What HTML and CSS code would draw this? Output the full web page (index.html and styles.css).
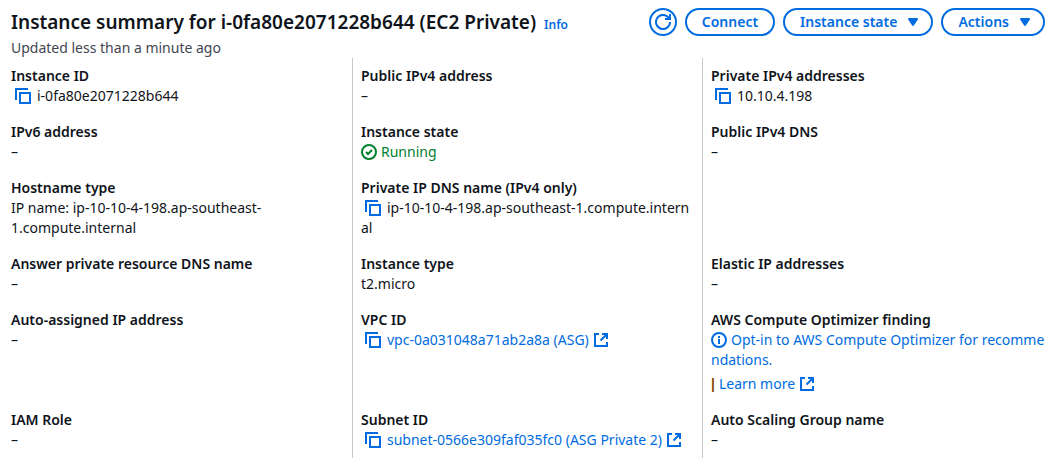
FILE: index.html
```html
<!DOCTYPE html>
<html lang="en">
<head>
<meta charset="utf-8">
<meta name="viewport" content="width=device-width, initial-scale=1">
<title>Instance summary</title>
<link rel="stylesheet" href="styles.css">
</head>
<body>
<svg class="sprite" aria-hidden="true">
  <symbol id="copy" viewBox="0 0 16 16"><path d="M1 12V1h12M5 5h10v10H5z" fill="none" stroke="currentColor" stroke-width="2"/></symbol>
  <symbol id="external" viewBox="0 0 16 16"><path d="M6 2H2v12h12v-4M9 2h5v5M13.5 2.5L7.5 8.5" fill="none" stroke="currentColor" stroke-width="2"/></symbol>
  <symbol id="check" viewBox="0 0 16 16"><circle cx="8" cy="8" r="7" fill="none" stroke="currentColor" stroke-width="2"/><path d="M5 8l2 2 4-4" fill="none" stroke="currentColor" stroke-width="2"/></symbol>
  <symbol id="info" viewBox="0 0 16 16"><circle cx="8" cy="8" r="7" fill="none" stroke="currentColor" stroke-width="2"/><path d="M8 4v2M8 7v5" fill="none" stroke="currentColor" stroke-width="2"/></symbol>
  <symbol id="refresh" viewBox="0 0 16 16"><path d="M15 8a7 7 0 1 1-1.7-4.6L15 5M10 5h5V0" fill="none" stroke="currentColor" stroke-width="2"/></symbol>
  <symbol id="caret" viewBox="0 0 16 16"><path d="M4 5h8l-4 6z" fill="currentColor" stroke="currentColor" stroke-width="2" stroke-linejoin="round"/></symbol>
</svg>
<main class="panel">
  <header class="header">
    <div class="heading">
      <div class="title-row">
        <h1 class="title">Instance summary for i-0fa80e2071228b644 (EC2 Private)</h1>
        <a class="info-link" href="#info">Info</a>
      </div>
      <p class="updated">Updated less than a minute ago</p>
    </div>
    <div class="actions">
      <button class="button button-icon" type="button" aria-label="Refresh"><svg class="icon"><use href="#refresh"/></svg></button>
      <button class="button" type="button">Connect</button>
      <button class="button" type="button">Instance state <svg class="icon caret"><use href="#caret"/></svg></button>
      <button class="button" type="button">Actions <svg class="icon caret"><use href="#caret"/></svg></button>
    </div>
  </header>
  <dl class="details">
    <div class="cell"><dt>Instance ID</dt><dd><button class="copy" type="button" aria-label="Copy instance ID"><svg class="icon"><use href="#copy"/></svg></button>i-0fa80e2071228b644</dd></div>
    <div class="cell"><dt>Public IPv4 address</dt><dd>–</dd></div>
    <div class="cell"><dt>Private IPv4 addresses</dt><dd><button class="copy" type="button" aria-label="Copy private IPv4 address"><svg class="icon"><use href="#copy"/></svg></button>10.10.4.198</dd></div>

    <div class="cell"><dt>IPv6 address</dt><dd>–</dd></div>
    <div class="cell"><dt>Instance state</dt><dd class="success"><svg class="icon status"><use href="#check"/></svg>Running</dd></div>
    <div class="cell"><dt>Public IPv4 DNS</dt><dd>–</dd></div>

    <div class="cell"><dt>Hostname type</dt><dd>IP name: ip-10-10-4-198.ap-southeast-<wbr>1.compute.internal</dd></div>
    <div class="cell"><dt>Private IP DNS name (IPv4 only)</dt><dd class="break"><button class="copy" type="button" aria-label="Copy private IP DNS name"><svg class="icon"><use href="#copy"/></svg></button>ip-10-10-4-198.ap-southeast-1.compute.internal</dd></div>
    <div class="cell"></div>

    <div class="cell"><dt>Answer private resource DNS name</dt><dd>–</dd></div>
    <div class="cell"><dt>Instance type</dt><dd>t2.micro</dd></div>
    <div class="cell"><dt>Elastic IP addresses</dt><dd>–</dd></div>

    <div class="cell"><dt>Auto-assigned IP address</dt><dd>–</dd></div>
    <div class="cell"><dt>VPC ID</dt><dd><button class="copy" type="button" aria-label="Copy VPC ID"><svg class="icon"><use href="#copy"/></svg></button><a href="#vpc">vpc-0a031048a71ab2a8a (ASG)<svg class="icon external"><use href="#external"/></svg></a></dd></div>
    <div class="cell"><dt>AWS Compute Optimizer finding</dt><dd class="break"><a href="#optimizer"><svg class="icon status"><use href="#info"/></svg>Opt-in to AWS Compute Optimizer for recommendations.</a></dd><dd class="more"><span class="divider">|</span><a href="#learn">Learn more<svg class="icon external"><use href="#external"/></svg></a></dd></div>

    <div class="cell"><dt>IAM Role</dt><dd>–</dd></div>
    <div class="cell"><dt>Subnet ID</dt><dd><button class="copy" type="button" aria-label="Copy subnet ID"><svg class="icon"><use href="#copy"/></svg></button><a href="#subnet">subnet-0566e309faf035fc0 (ASG Private 2)<svg class="icon external"><use href="#external"/></svg></a></dd></div>
    <div class="cell"><dt>Auto Scaling Group name</dt><dd>–</dd></div>
  </dl>
</main>
</body>
</html>
```

FILE: styles.css
```css
* { box-sizing: border-box; }
body {
  margin: 0;
  background: #fff;
  color: #0f141a;
  font: 14px/20px "Noto Sans", "Open Sans", sans-serif;
}
.sprite { position: absolute; width: 0; height: 0; }
.panel { padding: 8px 1px 0 2px; }
.header {
  display: flex;
  justify-content: space-between;
  align-items: flex-start;
  padding: 0 7px 0 9px;
}
.title-row { display: flex; align-items: baseline; gap: 8px; }
.title { margin: 0 0 2px; font-size: 19px; line-height: 28px; font-weight: 600; }
.info-link { font-size: 12px; font-weight: 600; }
.updated { margin: 0; color: #424650; }
a { color: #006ce0; text-decoration: none; }
.actions { display: flex; flex-shrink: 0; gap: 8px; }
.button {
  display: flex;
  align-items: center;
  gap: 8px;
  height: 28px;
  padding: 0 15px;
  border: 2px solid #006ce0;
  border-radius: 14px;
  background: #fff;
  color: #006ce0;
  font: inherit;
  font-weight: 600;
}
.button-icon { width: 28px; padding: 0 4px; }
.icon { display: inline-block; flex-shrink: 0; width: 16px; height: 16px; vertical-align: -3px; }
.caret { margin-right: -5px; }
.details {
  display: grid;
  grid-template-columns: repeat(3, minmax(0, 1fr));
  margin: 0;
}
.cell { padding: 8px 7px 8px 8px; border-left: 1px solid #c6c6cd; }
.cell:nth-child(3n + 1) { padding: 8px 16px 8px 9px; border-left: 0; }
dt { font-weight: 600; }
dd { margin: 0; }
.break { word-break: break-all; }
.copy {
  height: 20px;
  margin: 0 6px 0 4px;
  padding: 0;
  border: 0;
  background: none;
  color: #006ce0;
  font: inherit;
  vertical-align: top;
}
.status { margin-right: 4px; }
.success { color: #00802f; }
.external { margin-left: 4px; }
.more { display: flex; gap: 4px; padding-top: 4px; }
.divider { color: #8a4b00; font-family: "Liberation Sans", sans-serif; font-weight: 600; }
```
